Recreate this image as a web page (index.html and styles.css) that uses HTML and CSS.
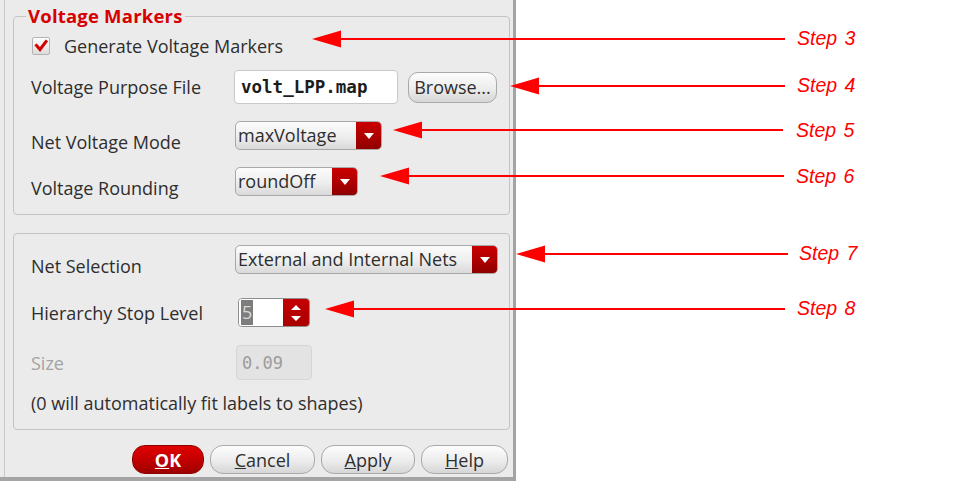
FILE: index.html
```html
<!DOCTYPE html>
<html>
<head>
<meta charset="utf-8">
<link rel="stylesheet" href="styles.css">
</head>
<body>
<div class="page">
  <div class="dialog">
    <div class="group g1">
      <div class="group-title">Voltage Markers</div>
      <div class="row r1">
        <span class="checkbox"><svg width="16" height="16" viewBox="0 0 16 16"><path d="M3.5 7.5 L7 11.5 L13 3.5" fill="none" stroke="#d40000" stroke-width="3" stroke-linecap="square"/></svg></span>
        <span class="check-label">Generate Voltage Markers</span>
      </div>
      <div class="row r2">
        <span class="lbl">Voltage Purpose File</span>
        <div class="textfield">volt_LPP.map</div>
        <div class="btn browse">Browse...</div>
      </div>
      <div class="row r3">
        <span class="lbl low">Net Voltage Mode</span>
        <div class="combo w-max"><span class="combo-text">maxVoltage</span><span class="combo-arrow"><svg width="10" height="6" viewBox="0 0 10 6"><path d="M0 0 H10 L5 6 Z" fill="#fff"/></svg></span></div>
      </div>
      <div class="row r4">
        <span class="lbl low">Voltage Rounding</span>
        <div class="combo w-round"><span class="combo-text">roundOff</span><span class="combo-arrow"><svg width="10" height="6" viewBox="0 0 10 6"><path d="M0 0 H10 L5 6 Z" fill="#fff"/></svg></span></div>
      </div>
    </div>

    <div class="group g2">
      <div class="row ra">
        <span class="lbl low">Net Selection</span>
        <div class="combo w-net"><span class="combo-text">External and Internal Nets</span><span class="combo-arrow"><svg width="10" height="6" viewBox="0 0 10 6"><path d="M0 0 H10 L5 6 Z" fill="#fff"/></svg></span></div>
      </div>
      <div class="row rb">
        <span class="lbl">Hierarchy Stop Level</span>
        <div class="spin"><span class="spin-field"><span class="sel">5</span></span><span class="spin-arrows"><svg width="10" height="20" viewBox="0 0 10 20"><path d="M0 7 H10 L5 2 Z M0 13 H10 L5 18 Z" fill="#fff"/></svg></span></div>
      </div>
      <div class="row rc">
        <span class="lbl disabled">Size</span>
        <div class="textfield off">0.09</div>
      </div>
      <div class="row rd">
        <span class="note">(0 will automatically fit labels to shapes)</span>
      </div>
    </div>

    <div class="buttons">
      <div class="btn ok"><u>O</u>K</div>
      <div class="btn cancel"><u>C</u>ancel</div>
      <div class="btn apply"><u>A</u>pply</div>
      <div class="btn help"><u>H</u>elp</div>
    </div>
  </div>

  <svg class="annotations" width="963" height="483" viewBox="0 0 963 483">
    <g fill="#ff0000" stroke="none">
      <polygon points="312,39 341,30.5 341,47.5"/>
      <polygon points="510,86 539,77.5 539,94.5"/>
      <polygon points="393,130 422,121.5 422,138.5"/>
      <polygon points="380,176 409,167.5 409,184.5"/>
      <polygon points="516,254 545,245.5 545,262.5"/>
      <polygon points="325,309 354,300.5 354,317.5"/>
    </g>
    <g stroke="#ff0000" stroke-width="2">
      <line x1="340" y1="39" x2="785" y2="39"/>
      <line x1="538" y1="86" x2="785" y2="86"/>
      <line x1="421" y1="130" x2="783" y2="130"/>
      <line x1="408" y1="176" x2="784" y2="176"/>
      <line x1="544" y1="254" x2="788" y2="254"/>
      <line x1="353" y1="309" x2="785" y2="309"/>
    </g>
    <g class="steps">
      <text x="797" y="45">Step 3</text>
      <text x="797" y="92">Step 4</text>
      <text x="796" y="137">Step 5</text>
      <text x="796" y="183">Step 6</text>
      <text x="799" y="260">Step 7</text>
      <text x="797" y="315">Step 8</text>
    </g>
  </svg>
</div>
</body>
</html>
```

FILE: styles.css
```css
html, body {
  margin: 0;
  padding: 0;
  background: #ffffff;
}

body {
  font-family: "Open Sans", "Noto Sans", "DejaVu Sans", sans-serif;
  font-size: 18px;
  color: #2e2e2e;
}

.page {
  position: relative;
  width: 963px;
  height: 483px;
  overflow: hidden;
}

.dialog {
  box-sizing: border-box;
  width: 516px;
  height: 481px;
  padding-top: 16px;
  background: #ebebeb;
  border-right: 3px solid #a4a4a4;
  border-bottom: 4px solid #a4a4a4;
  box-shadow: inset 4px 0 0 #ebebeb, inset 5px 0 0 #c8c8c8;
}

.group {
  box-sizing: border-box;
  width: 497px;
  margin-left: 13px;
  border: 1px solid #c4c4c4;
  border-radius: 4px;
  padding-left: 17px;
}

.g1 {
  padding-bottom: 18px;
}

.g2 {
  margin-top: 18px;
  padding-bottom: 16px;
}

.group-title {
  width: max-content;
  margin: -11px 0 0 -5px;
  padding: 0 2px;
  line-height: 20px;
  background: #ebebeb;
  color: #d60000;
  font-weight: bold;
  font-size: 18.5px;
  letter-spacing: 0.2px;
}

.row {
  display: flex;
  align-items: center;
}

.r1 { margin-top: 8px; height: 24px; }
.r2 { margin-top: 12px; height: 34px; }
.r3 { margin-top: 17px; height: 29px; }
.r4 { margin-top: 17px; height: 29px; }
.ra { margin-top: 11px; height: 29px; }
.rb { margin-top: 24px; height: 29px; }
.rc { margin-top: 18px; height: 35px; }
.rd { margin-top: 13px; height: 20px; }

.lbl {
  flex: none;
  width: 204px;
  line-height: 20px;
  white-space: nowrap;
}

.lbl.low {
  margin-top: 12px;
  margin-bottom: 0;
}

.lbl.disabled {
  color: #a3a3a3;
}

.note {
  line-height: 20px;
  white-space: nowrap;
}

.checkbox {
  box-sizing: border-box;
  width: 18px;
  height: 18px;
  margin-left: 1px;
  border: 1px solid #b4b4b4;
  border-radius: 2px;
  background: linear-gradient(#fdfdfd, #dcdcdc);
  display: flex;
  align-items: center;
  justify-content: center;
}

.check-label {
  margin-left: 14px;
  line-height: 20px;
  white-space: nowrap;
}

.textfield {
  box-sizing: border-box;
  width: 164px;
  height: 34px;
  margin-left: -1px;
  padding-left: 6px;
  background: #ffffff;
  border: 1px solid #c9c9c9;
  border-radius: 4px;
  font-family: "DejaVu Sans Mono", "Liberation Mono", monospace;
  font-weight: bold;
  font-size: 17.5px;
  color: #1c1c1c;
  display: flex;
  align-items: center;
}

.textfield.off {
  width: 76px;
  height: 35px;
  margin-left: 1px;
  padding-left: 5px;
  background: #e3e3e3;
  border-color: #d6d6d6;
  font-weight: normal;
  font-size: 17px;
  color: #9c9c9c;
}

.btn {
  box-sizing: border-box;
  display: flex;
  align-items: center;
  justify-content: center;
  background: linear-gradient(#fdfdfd 0%, #ececec 55%, #d6d6d6 100%);
  border: 1px solid #a9a9a9;
  color: #2e2e2e;
  white-space: nowrap;
}

.browse {
  width: 89px;
  height: 31px;
  margin-left: 10px;
  border-radius: 10px;
}

.combo {
  box-sizing: border-box;
  height: 29px;
  display: flex;
  border: 1px solid #a8a8a8;
  border-radius: 5px;
  overflow: hidden;
  background: linear-gradient(#fbfbfb 0%, #eeeeee 55%, #d9d9d9 100%);
}

.w-max { width: 147px; }
.w-round { width: 123px; }
.w-net { width: 263px; }

.combo-text {
  flex: 1;
  padding-left: 2px;
  line-height: 27px;
  white-space: nowrap;
}

.combo-arrow {
  flex: none;
  width: 25px;
  display: flex;
  align-items: center;
  justify-content: center;
  background: linear-gradient(#c90000 0%, #b00000 50%, #8e0000 100%);
}

.spin {
  box-sizing: border-box;
  width: 72px;
  height: 29px;
  margin-left: 3px;
  display: flex;
  border: 1px solid #8e8e8e;
  border-radius: 4px;
  overflow: hidden;
}

.spin-field {
  flex: 1;
  background: #ffffff;
  display: flex;
  align-items: center;
  padding-left: 2px;
}

.sel {
  background: #7d7d7d;
  color: #d8d8d8;
  line-height: 25px;
  padding: 0 1px;
}

.spin-arrows {
  flex: none;
  width: 26px;
  display: flex;
  align-items: center;
  justify-content: center;
  background: linear-gradient(#c40000 0%, #a90000 100%);
}

.buttons {
  margin-top: 15px;
  height: 29px;
  display: flex;
  justify-content: flex-end;
  padding-right: 5px;
}

.buttons .btn {
  height: 29px;
  border-radius: 13px;
  margin-left: 6px;
}

.ok {
  width: 72px;
  background: linear-gradient(#e00000 0%, #c40000 50%, #9e0000 100%);
  border-color: #8a0000;
  color: #ffffff;
  font-weight: bold;
}

.cancel { width: 105px; margin-left: 7px; }
.apply { width: 94px; }
.help { width: 87px; }

.annotations {
  position: absolute;
  left: 0;
  top: 0;
  pointer-events: none;
}

.steps text {
  font-family: "Liberation Sans", Arial, sans-serif;
  font-style: italic;
  font-size: 19.5px;
  fill: #ff0000;
  word-spacing: 2px;
}
```
